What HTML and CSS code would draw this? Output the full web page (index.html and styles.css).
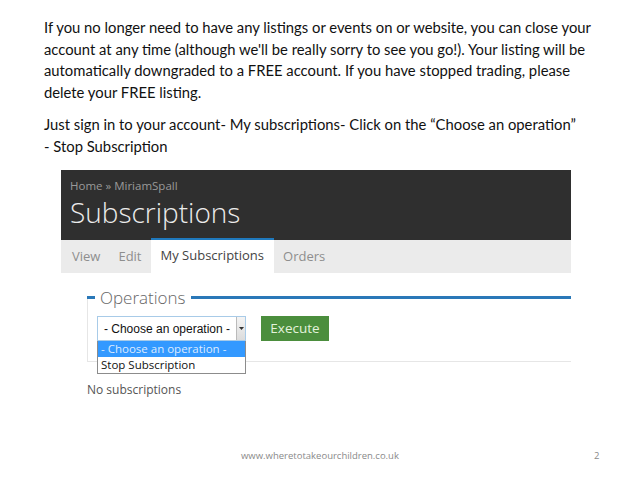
FILE: index.html
```html
<!DOCTYPE html>
<html lang="en">
<head>
    <meta charset="UTF-8">
    <title>Stop Subscription</title>
    <link rel="stylesheet" href="styles.css">
</head>
<body>
    <div class="slide">
        <div class="intro">
            <p>If you no longer need to have any listings or events on or website, you can close your<br>
            account at any time (although we'll be really sorry to see you go!). Your listing will be<br>
            automatically downgraded to a FREE account. If you have stopped trading, please<br>
            delete your FREE listing.</p>
            <p>Just sign in to your account- My subscriptions- Click on the &ldquo;Choose an operation&rdquo;<br>
            - Stop Subscription</p>
        </div>

        <div class="shot">
            <div class="page-head">
                <div class="crumbs">Home &raquo; MiriamSpall</div>
                <h1>Subscriptions</h1>
            </div>
            <ul class="tabs">
                <li>View</li>
                <li>Edit</li>
                <li class="active">My Subscriptions</li>
                <li>Orders</li>
            </ul>

            <div class="ops">
                <div class="ops-legend">
                    <span class="dash"></span>
                    <span class="legend-text">Operations</span>
                    <span class="line"></span>
                </div>
                <div class="ops-body">
                    <div class="select-wrap">
                        <div class="select">
                            <span class="select-text">- Choose an operation -</span>
                            <span class="select-arrow">
                                <svg width="5" height="3" viewBox="0 0 5 3"><path d="M0 0h5L2.5 3z" fill="#333"/></svg>
                            </span>
                        </div>
                        <ul class="select-list">
                            <li class="picked">- Choose an operation -</li>
                            <li>Stop Subscription</li>
                        </ul>
                    </div>
                    <button class="execute">Execute</button>
                </div>
            </div>

            <p class="empty">No subscriptions</p>
        </div>

        <div class="footer">
            <span class="site">www.wheretotakeourchildren.co.uk</span>
            <span class="page-no">2</span>
        </div>
    </div>
</body>
</html>
```

FILE: styles.css
```css
body {
    margin: 0;
    background-color: white;
    font-family: 'Lato', sans-serif;
}

.slide {
    width: 638px;
    height: 479px;
    position: relative;
}

.intro {
    padding: 17px 0 0 44px;
    font-size: 14.8px;
    line-height: 21.5px;
    color: #111;
}

.intro p {
    margin: 0 0 11px 0;
    white-space: nowrap;
}

.shot {
    margin: 13px 0 0 61px;
    width: 510px;
    font-family: 'Open Sans', sans-serif;
}

.page-head {
    background-color: #2f2f2f;
    height: 70px;
    padding-left: 9px;
    box-sizing: border-box;
    overflow: hidden;
}

.crumbs {
    padding-top: 8px;
    font-size: 11.5px;
    color: #9a9a9a;
}

.page-head h1 {
    margin: 0;
    font-size: 28px;
    font-weight: 300;
    color: #ececec;
    line-height: 38px;
}

.tabs {
    list-style: none;
    margin: 0;
    padding: 0 0 0 2px;
    display: flex;
    background-color: #ebebeb;
    height: 33px;
}

.tabs li {
    padding: 0 9px;
    font-size: 13px;
    line-height: 33px;
    color: #8e8e8e;
}

.tabs li.active {
    padding: 0 10px;
    background-color: white;
    color: #444;
    border-top: 2px solid #1f79bd;
    line-height: 31px;
    margin-top: -2px;
}

.ops {
    margin: 14px 0 0 26px;
}

.ops-legend {
    display: flex;
    align-items: center;
    height: 20px;
}

.dash {
    width: 8px;
    height: 3px;
    background-color: #2a78b8;
}

.legend-text {
    padding: 0 5px;
    font-size: 17px;
    font-weight: 300;
    color: #666;
}

.line {
    flex: 1;
    height: 3px;
    background-color: #2a78b8;
}

.ops-body {
    margin-top: -9px;
    border-left: 1px solid #e6e6e6;
    border-bottom: 1px solid #e6e6e6;
    padding: 18px 0 20px 9px;
    display: flex;
    align-items: center;
    gap: 15px;
}

.select-wrap {
    position: relative;
}

.select {
    width: 149px;
    height: 25px;
    box-sizing: border-box;
    border: 1px solid #a8cbe8;
    display: flex;
    align-items: center;
    background-color: white;
}

.select-text {
    flex: 1;
    text-align: center;
    font-family: 'Liberation Sans', sans-serif;
    font-size: 12px;
    color: #111;
}

.select-arrow {
    width: 8px;
    height: 23px;
    border-left: 1px solid #bbb;
    background: linear-gradient(#f4f4f4, #dcdcdc);
    display: flex;
    align-items: center;
    justify-content: center;
}

.select-list {
    position: absolute;
    top: 25px;
    left: 0;
    width: 149px;
    box-sizing: border-box;
    margin: 0;
    padding: 0;
    list-style: none;
    border: 1px solid #8c8c8c;
    border-top: none;
    background-color: white;
    font-family: 'Open Sans', sans-serif;
    font-size: 11.5px;
}

.select-list li {
    height: 16px;
    line-height: 16px;
    padding-left: 3px;
    color: #111;
}

.select-list li.picked {
    background-color: #3399ff;
    color: #dcebff;
}

.execute {
    width: 68px;
    height: 25px;
    border: none;
    background-color: #4b8e3d;
    color: #e3f2dc;
    font-family: 'Open Sans', sans-serif;
    font-size: 13.5px;
    padding: 0;
    margin-top: -1px;
}

.empty {
    margin: 19px 0 0 26px;
    font-size: 12px;
    color: #555;
}

.footer {
    position: absolute;
    left: 0;
    right: 0;
    top: 449px;
    font-family: 'Open Sans', sans-serif;
    font-size: 9.5px;
    color: #8a8a8a;
}

.site {
    position: absolute;
    left: 241px;
}

.page-no {
    position: absolute;
    left: 594px;
}
```
